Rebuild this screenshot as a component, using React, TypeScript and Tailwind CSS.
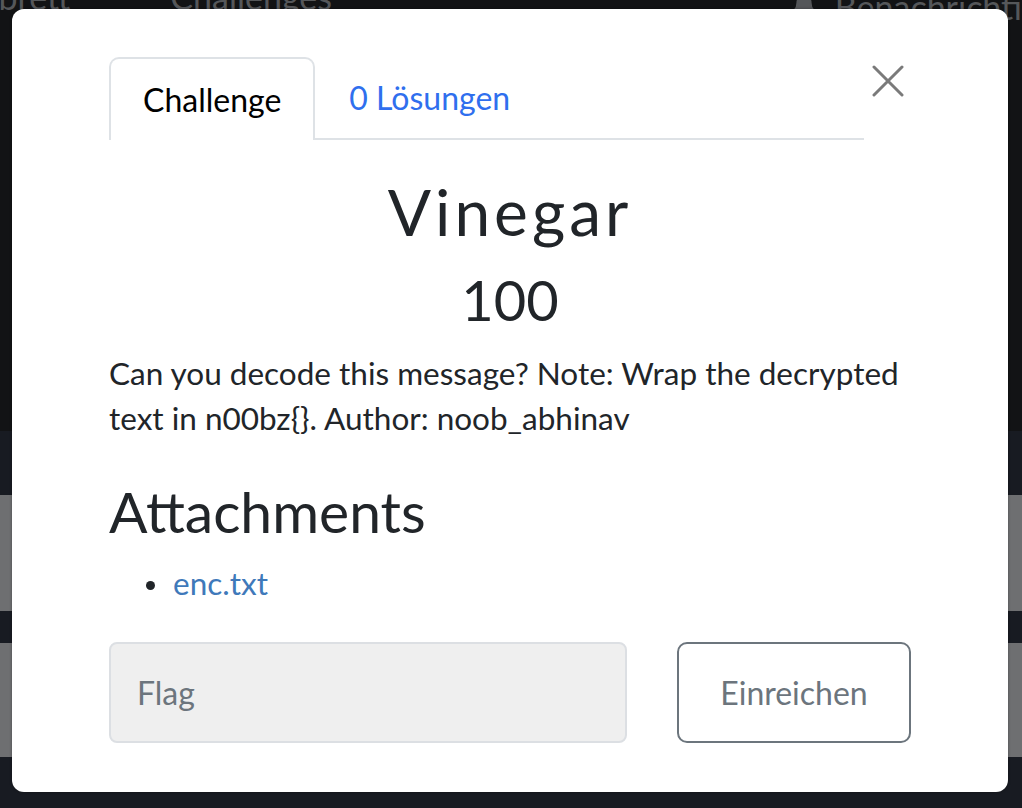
import { Bell } from "lucide-react";

const CloseIcon = () => (
	<svg width="32" height="32" viewBox="0 0 32 32" fill="none">
		<path
			d="M2 2 L30 30 M30 2 L2 30"
			stroke="#7a7a7a"
			strokeWidth="3"
			strokeLinecap="round"
		/>
	</svg>
);

export default function App() {
	return (
		<div
			className="relative h-[808px] w-[1022px] overflow-hidden bg-[#181b22]"
			style={{ fontFamily: "Lato, 'Noto Sans', sans-serif" }}
		>
			{/* page behind the modal */}
			<div className="h-[431px] bg-[#121315]">
				<div className="flex items-start h-[40px] text-[34px] leading-[34px] text-[#55575a]">
					<span className="-mt-[20px] -ml-[107px]">Punktebrett</span>
					<span className="-mt-[20px] ml-[100px]">Challenges</span>
					<div className="ml-auto -mt-[10px] flex items-center gap-[18px] -mr-[110px]">
						<Bell size={26} fill="#55575a" stroke="#55575a" />
						<span>Benachrichtigungen</span>
					</div>
				</div>
			</div>
			<div className="h-[64px]" />
			<div className="h-[116px] bg-[#6e6f71]" />
			<div className="h-[32px]" />
			<div className="h-[114px] bg-[#6e6f71]" />

			{/* modal */}
			<div className="absolute left-[12px] top-[9px] w-[996px] h-[783px] rounded-[12px] bg-white px-[97px] pt-[48px] text-[#212529] shadow-[0_0_3px_rgba(0,0,0,0.35)]">
				<div className="flex items-start">
					<div className="flex flex-1 border-b-2 border-[#dee2e6]">
						<div className="-mb-[2px] h-[83px] flex items-center rounded-t-[10px] border-2 border-b-0 border-[#dee2e6] bg-white px-[32px] text-[32px] text-black">
							Challenge
						</div>
						<div className="h-[81px] flex items-center px-[34px] text-[32px] text-[#2f6fee]">
							0 Lösungen
						</div>
					</div>
					<button
						type="button"
						className="ml-[8px] mr-[7px] mt-[8px] w-[32px] h-[32px]"
					>
						<CloseIcon />
					</button>
				</div>

				<h2 className="mt-[33px] text-center text-[64px] leading-[77px] tracking-[4px]">
					Vinegar
				</h2>
				<h3 className="mt-[16px] text-center text-[56px] leading-[67px]">
					100
				</h3>
				<p className="mt-[18px] text-[31.5px] leading-[45px]">
					Can you decode this message? Note: Wrap the decrypted text in
					n00bz{"{}"}. Author: noob_abhinav
				</p>
				<h4 className="mt-[36px] text-[57px] leading-[68px]">Attachments</h4>
				<ul className="mt-[16px]">
					<li className="flex items-center h-[45px]">
						<span className="ml-[37px] mt-[4px] w-[9px] h-[9px] rounded-full bg-[#212529]" />
						<span className="ml-[18px] text-[31.5px] leading-[45px] text-[#3f79ba]">
							enc.txt
						</span>
					</li>
				</ul>
				<div className="mt-[36px] flex items-stretch gap-[50px]">
					<div className="w-[518px] h-[101px] flex items-center rounded-[8px] border-2 border-[#dcdfe3] bg-[#efefef] px-[26px] text-[32px] text-[#6c757d]">
						Flag
					</div>
					<button
						type="button"
						className="flex-1 h-[101px] rounded-[10px] border-2 border-[#6c757d] text-[32px] text-[#6c757d]"
					>
						Einreichen
					</button>
				</div>
			</div>
		</div>
	);
}
